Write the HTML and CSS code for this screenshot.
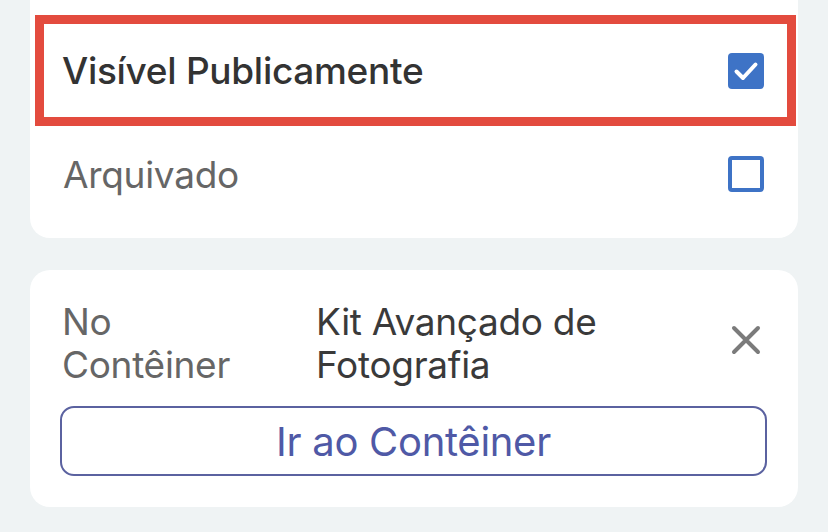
FILE: index.html
```html
<!DOCTYPE html>
<html lang="pt">
<head>
<meta charset="utf-8">
<link rel="stylesheet" href="styles.css">
</head>
<body>
<div class="page">
  <section class="card card-top">
    <div class="row row-highlight">
      <span class="label label-strong">Visível Publicamente</span>
      <span class="checkbox checked">
        <svg viewBox="0 0 36 36" width="36" height="36"><path d="M8.5 18.5 L15 25 L27.5 11.5" fill="none" stroke="#fff" stroke-width="4" stroke-linecap="round" stroke-linejoin="round"/></svg>
      </span>
    </div>
    <div class="row row-plain">
      <span class="label label-muted">Arquivado</span>
      <span class="checkbox"></span>
    </div>
  </section>

  <section class="card card-bottom">
    <div class="info">
      <div class="info-key">No<br>Contêiner</div>
      <div class="info-value">Kit Avançado de<br>Fotografia</div>
      <button class="clear" aria-label="Remover">
        <svg viewBox="0 0 30 30" width="30" height="30"><path d="M3 3 L27 27 M27 3 L3 27" stroke="#7b7b7b" stroke-width="4" stroke-linecap="round"/></svg>
      </button>
    </div>
    <button class="go-btn">Ir ao Contêiner</button>
  </section>
</div>
</body>
</html>
```

FILE: styles.css
```css
* { box-sizing: border-box; }
html, body {
  margin: 0;
  padding: 0;
  background: #eff3f4;
  font-family: Inter, "Noto Sans", sans-serif;
}
.page {
  width: 828px;
  height: 532px;
  overflow: hidden;
  padding: 0 30px;
}
.card {
  background: #fff;
  border-radius: 20px;
}
.card-top {
  border-top-left-radius: 0;
  border-top-right-radius: 0;
  padding: 15px 2px 16px 5px;
}
.row {
  display: flex;
  align-items: center;
  justify-content: space-between;
}
.row-highlight {
  height: 111px;
  border: 9px solid #e34b3e;
  padding: 0 23px 0 18px;
}
.row-plain {
  height: 96px;
  padding: 0 32px 0 28px;
}
.label {
  font-size: 37px;
  letter-spacing: -0.3px;
}
.label-strong {
  font-weight: 500;
  color: #333;
}
.label-muted {
  color: #666;
}
.checkbox {
  width: 36px;
  height: 36px;
  border: 4px solid #3e73c6;
  border-radius: 4px;
  display: flex;
}
.checkbox.checked {
  background: #3e73c6;
  border: none;
}
.card-bottom {
  margin-top: 32px;
  padding: 30px 31px 31px 30px;
}
.info {
  display: flex;
  align-items: center;
  font-size: 37px;
  letter-spacing: -0.3px;
  line-height: 43px;
}
.info-key {
  width: 256px;
  padding-left: 2px;
  color: #666;
}
.info-value {
  flex: 1;
  color: #3a3a3a;
}
.clear {
  background: none;
  border: none;
  padding: 0;
  margin-right: 6px;
  margin-top: -6px;
  width: 30px;
  height: 30px;
  display: flex;
}
.go-btn {
  display: block;
  width: 100%;
  height: 70px;
  margin-top: 20px;
  background: #fff;
  border: 2px solid #5b62a0;
  border-radius: 14px;
  color: #4f59a6;
  font-family: Inter, "Noto Sans", sans-serif;
  font-size: 40px;
  letter-spacing: -0.3px;
  padding: 0;
}
```
